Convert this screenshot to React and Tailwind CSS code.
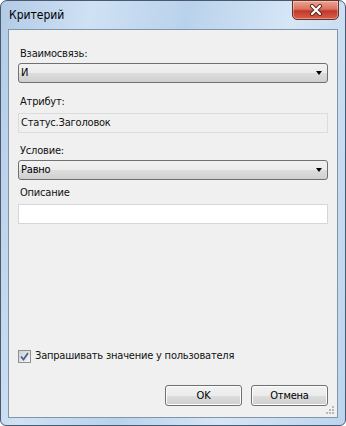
import React from 'react';

const font = "font-['DejaVu_Sans_Condensed','Liberation_Sans',sans-serif]";

function ComboBox({ value }) {
  return (
    <div className="relative mx-[9px] h-[20px] rounded-[3px] border border-[#707070] bg-[linear-gradient(180deg,#f2f2f2_0%,#ebebeb_50%,#dddddd_51%,#cfcfcf_100%)] pl-[2px] text-[11px] leading-[18px] text-black">
      {value}
      <span className="absolute right-[5px] top-[7px] h-0 w-0 border-x-[3.5px] border-t-[4px] border-x-transparent border-t-black" />
    </div>
  );
}

function Button({ children }) {
  return (
    <button className="h-[21px] w-[77px] rounded-[3px] border border-[#707070] bg-[linear-gradient(180deg,#f2f2f2_0%,#ebebeb_50%,#dddddd_51%,#cfcfcf_100%)] text-[11px] leading-[19px] text-black shadow-[inset_0_0_0_1px_#fcfcfc]">
      {children}
    </button>
  );
}

export default function App() {
  return (
    <div className={`h-[426px] w-[346px] bg-white ${font}`}>
      <div className="relative flex h-full flex-col rounded-t-[7px] rounded-b-[6px] border border-[#4a5a6c] bg-[linear-gradient(100deg,#b2cbe6_0%,#cfe1f4_22%,#b9d2ec_45%,#d6e6f6_70%,#bcd4ed_100%)] px-[7px] pb-[7px]">
        {/* Title bar */}
        <div className="flex h-[28px] items-center pl-[1px] text-[12px] text-black">Критерий</div>
        <div className="absolute right-[6px] top-[-1px] flex h-[20px] w-[47px] items-center justify-center rounded-b-[5px] border border-[#6b2f25] bg-[linear-gradient(180deg,#e9a595_0%,#d9735f_45%,#c2382a_55%,#d5604a_100%)] shadow-[inset_0_0_0_1px_rgba(255,255,255,0.35)]">
          <svg width="14" height="12" viewBox="0 0 14 12">
            <path d="M3 2 L11 10 M11 2 L3 10" stroke="#5a2a22" strokeWidth="4" strokeLinecap="round" />
            <path d="M3 2 L11 10 M11 2 L3 10" stroke="#ffffff" strokeWidth="2.2" strokeLinecap="round" />
          </svg>
        </div>

        {/* Client area */}
        <div className="relative flex flex-1 flex-col border border-[#8294a8] bg-[#f0f0f0] text-[11px] tracking-[-0.2px] text-[#111]">
          <div className="mx-[11px] mt-[17px] h-[14px] leading-[14px]">Взаимосвязь:</div>
          <div className="mt-[2px]">
            <ComboBox value="И" />
          </div>

          <div className="mx-[11px] mt-[12px] h-[14px] leading-[14px]">Атрибут:</div>
          <div className="mx-[9px] mt-[4px] h-[20px] border border-[#dcdcdc] pl-[2px] leading-[18px]">Статус.Заголовок</div>

          <div className="mx-[11px] mt-[11px] h-[14px] leading-[14px]">Условие:</div>
          <div className="mt-[2px]">
            <ComboBox value="Равно" />
          </div>

          <div className="mx-[11px] mt-[6px] h-[14px] leading-[14px]">Описание</div>
          <div className="mx-[9px] mt-[4px] h-[20px] border border-[#d6d6d6] bg-white" />

          <div className="flex-1" />

          <div className="ml-[9px] flex h-[14px] items-center gap-[4px]">
            <span className="flex h-[13px] w-[13px] items-center justify-center border border-[#8e8f8f] bg-[linear-gradient(135deg,#cbcfd5,#f6f6f6)]">
              <svg width="9" height="9" viewBox="0 0 9 9">
                <path d="M1 4.5 L3.5 7.5 L8 1" fill="none" stroke="#4a5f97" strokeWidth="1.8" />
              </svg>
            </span>
            <span className="leading-[14px]">Запрашивать значение у пользователя</span>
          </div>

          <div className="mb-[11px] mr-[9px] mt-[22px] flex justify-end gap-[9px]">
            <Button>OK</Button>
            <Button>Отмена</Button>
          </div>

          <svg className="absolute bottom-[2px] right-[2px]" width="10" height="10" viewBox="0 0 10 10">
            <g fill="#b8b8b8">
              <rect x="7" y="1" width="2" height="2" />
              <rect x="4" y="4" width="2" height="2" />
              <rect x="7" y="4" width="2" height="2" />
              <rect x="1" y="7" width="2" height="2" />
              <rect x="4" y="7" width="2" height="2" />
              <rect x="7" y="7" width="2" height="2" />
            </g>
          </svg>
        </div>
      </div>
    </div>
  );
}
